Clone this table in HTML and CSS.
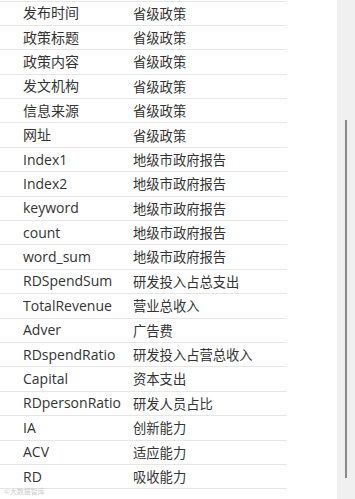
FILE: index.html
```html
<!DOCTYPE html>
<html lang="zh">
<head>
<meta charset="utf-8">
<link rel="stylesheet" href="styles.css">
</head>
<body>
<div class="page">
  <div class="table">
    <div class="row"><span class="k">发布时间</span><span class="v">省级政策</span></div>
    <div class="row"><span class="k">政策标题</span><span class="v">省级政策</span></div>
    <div class="row"><span class="k">政策内容</span><span class="v">省级政策</span></div>
    <div class="row"><span class="k">发文机构</span><span class="v">省级政策</span></div>
    <div class="row"><span class="k">信息来源</span><span class="v">省级政策</span></div>
    <div class="row"><span class="k">网址</span><span class="v">省级政策</span></div>
    <div class="row"><span class="k">Index1</span><span class="v">地级市政府报告</span></div>
    <div class="row"><span class="k">Index2</span><span class="v">地级市政府报告</span></div>
    <div class="row"><span class="k">keyword</span><span class="v">地级市政府报告</span></div>
    <div class="row"><span class="k">count</span><span class="v">地级市政府报告</span></div>
    <div class="row"><span class="k">word_sum</span><span class="v">地级市政府报告</span></div>
    <div class="row"><span class="k">RDSpendSum</span><span class="v">研发投入占总支出</span></div>
    <div class="row"><span class="k">TotalRevenue</span><span class="v">营业总收入</span></div>
    <div class="row"><span class="k">Adver</span><span class="v">广告费</span></div>
    <div class="row"><span class="k">RDspendRatio</span><span class="v">研发投入占营总收入</span></div>
    <div class="row"><span class="k">Capital</span><span class="v">资本支出</span></div>
    <div class="row"><span class="k">RDpersonRatio</span><span class="v">研发人员占比</span></div>
    <div class="row"><span class="k">IA</span><span class="v">创新能力</span></div>
    <div class="row"><span class="k">ACV</span><span class="v">适应能力</span></div>
    <div class="row last"><span class="k">RD</span><span class="v">吸收能力</span></div>
    <div class="mark">©大数据智库</div>
  </div>
  <div class="scroll"><div class="thumb"></div></div>
</div>
</body>
</html>
```

FILE: styles.css
```css
html, body {
  margin: 0;
  padding: 0;
  background: #fff;
}
.page {
  width: 355px;
  height: 499px;
  display: flex;
  overflow: hidden;
}
.table {
  width: 287px;
  position: relative;
  font-family: "Open Sans", "Noto Sans CJK SC", sans-serif;
  font-size: 13.3px;
  color: #333;
}
.row {
  box-sizing: border-box;
  height: 24.4px;
  border-top: 1px solid #e6e6e6;
  display: grid;
  grid-template-columns: 110px 1fr;
  align-items: center;
  padding-left: 23px;
  line-height: 1;
}
.row:first-child {
  margin-top: 0.5px;
}
.row.last {
  border-bottom: 1px solid #e6e6e6;
  height: 25.4px;
}
.k, .v {
  white-space: nowrap;
}
.k {
  font-size: 14px;
}
.v {
  font-family: "Noto Sans CJK SC", sans-serif;
}
.mark {
  position: absolute;
  left: 4px;
  top: 487px;
  font-family: "Noto Sans CJK SC", sans-serif;
  font-size: 7px;
  line-height: 8px;
  color: #cccccc;
}
.scroll {
  margin-left: auto;
  width: 18px;
  background: #f0f0f0;
  position: relative;
}
.thumb {
  position: absolute;
  left: 8px;
  top: 120px;
  width: 2px;
  height: 358px;
  background: #8a8a8a;
}
```
